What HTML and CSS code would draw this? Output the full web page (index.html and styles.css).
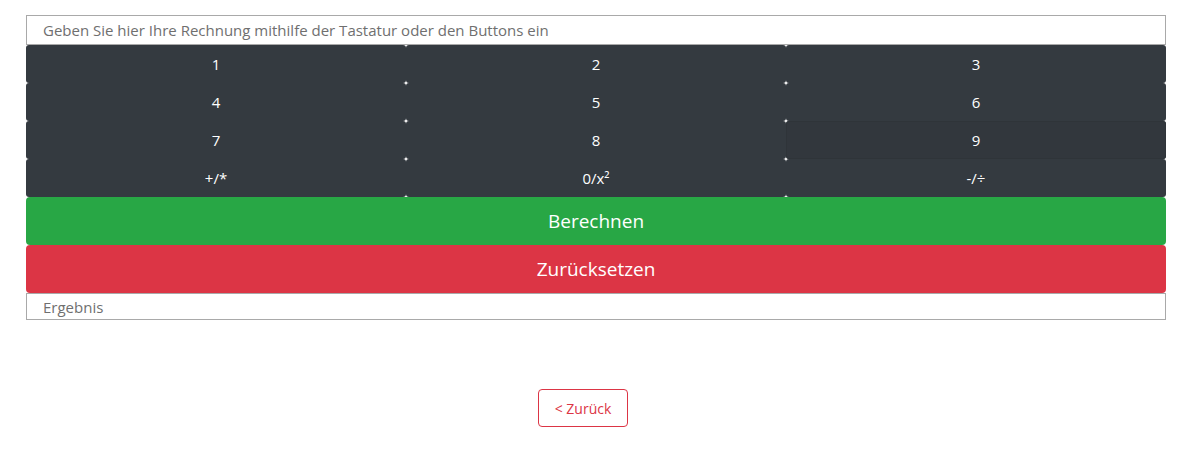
FILE: index.html
```html
<!DOCTYPE html>
<html lang="de">
<head>
<meta charset="utf-8">
<title>Rechner</title>
<link rel="stylesheet" href="styles.css">
</head>
<body>
<div class="container">
  <input class="field field-top" type="text" placeholder="Geben Sie hier Ihre Rechnung mithilfe der Tastatur oder den Buttons ein">
  <div class="keypad">
    <button class="key">1</button>
    <button class="key">2</button>
    <button class="key">3</button>
    <button class="key">4</button>
    <button class="key">5</button>
    <button class="key">6</button>
    <button class="key">7</button>
    <button class="key">8</button>
    <button class="key key-focus">9</button>
    <button class="key">+/*</button>
    <button class="key">0/x²</button>
    <button class="key">-/÷</button>
  </div>
  <button class="action action-green">Berechnen</button>
  <button class="action action-red">Zurücksetzen</button>
  <input class="field field-bottom" type="text" placeholder="Ergebnis">
  <div class="back-row">
    <button class="back">&lt; Zurück</button>
  </div>
</div>
</body>
</html>
```
FILE: styles.css
```css
html, body {
  margin: 0;
  padding: 0;
  background: #fff;
}
body {
  font-family: "Open Sans", "Noto Sans", sans-serif;
}
.container {
  width: 1140px;
  margin-left: 26px;
  padding-top: 15px;
  display: flex;
  flex-direction: column;
}
.field {
  box-sizing: border-box;
  width: 100%;
  border: 1px solid #a9a9a9;
  padding: 0 0 0 16px;
  font-family: inherit;
  font-size: 15px;
  color: #333;
  background: #fff;
  outline: none;
  margin: 0;
}
.field::placeholder {
  color: #6f6f6f;
}
.field-top {
  height: 30px;
}
.field-bottom {
  height: 27px;
}
.keypad {
  display: grid;
  grid-template-columns: repeat(3, 1fr);
}
.key {
  height: 38px;
  margin: 0;
  border: none;
  border-radius: 3px;
  background: #343a40;
  color: #fff;
  font-family: inherit;
  font-size: 15px;
  padding: 0;
  cursor: pointer;
}
.key-focus {
  background: #32373d;
  box-shadow: inset 0 0 0 1px #2f3439;
}
.action {
  height: 48px;
  margin: 0;
  border: none;
  border-radius: 4px;
  color: #fff;
  font-family: inherit;
  font-size: 19px;
  padding: 0;
  cursor: pointer;
}
.action-green {
  background: #28a745;
}
.action-red {
  background: #dc3545;
}
.back-row {
  display: flex;
  padding-top: 69px;
  padding-left: 512px;
}
.back {
  box-sizing: border-box;
  height: 38px;
  width: 90px;
  background: #fff;
  border: 1px solid #dc3545;
  border-radius: 4px;
  color: #dc3545;
  font-family: inherit;
  font-size: 14px;
  padding: 0;
  cursor: pointer;
}
```
